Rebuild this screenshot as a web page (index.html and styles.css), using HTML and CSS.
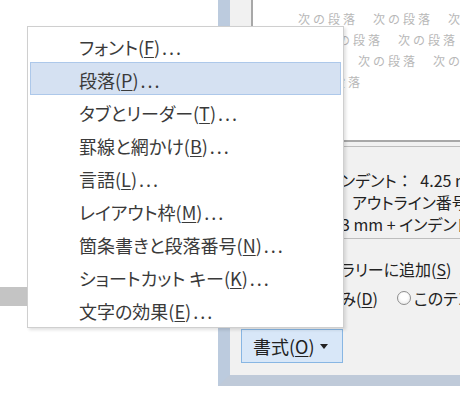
FILE: index.html
```html
<!DOCTYPE html>
<html lang="ja">

<head>
    <meta charset="UTF-8">
    <meta name="viewport" content="width=device-width, initial-scale=1.0">
    <title>書式メニュー</title>
    <link rel="stylesheet" href="styles.css">
</head>

<body>
    <!-- piece of the window behind -->
    <div class="back-bar"></div>

    <div class="dialog">
        <div class="preview">
            <div class="pv-line pv-1">次の段落　次の段落　次の段落</div>
            <div class="pv-line pv-2">次の段落　次の段落　次の段落</div>
            <div class="pv-line pv-3">次の段落　次の段落　次の段落</div>
            <div class="pv-line pv-4">次の段落</div>
        </div>

        <div class="desc">
            <div class="desc-line">ンデント<span class="colon">：</span> 4.25 mm</div>
            <div class="desc-line shift">アウトライン番号 + レベル: 1</div>
            <div class="desc-line">3 mm + インデント: 7.4 mm</div>
        </div>

        <div class="opt-row opt-check">ラリーに追加(<u>S</u>)</div>
        <div class="opt-row opt-radio">
            <span>のみ(<u>D</u>)</span>
            <span class="radio"></span>
            <span class="radio-text">このテンプレートを使用した新規文書</span>
        </div>

        <button class="fmt-btn">書式(<u>O</u>)<span class="caret"></span></button>
    </div>

    <ul class="menu">
        <li>フォント(<u>F</u>)<span class="dots">...</span></li>
        <li class="active">段落(<u>P</u>)<span class="dots">...</span></li>
        <li>タブとリーダー(<u>T</u>)<span class="dots">...</span></li>
        <li>罫線と網かけ(<u>B</u>)<span class="dots">...</span></li>
        <li>言語(<u>L</u>)<span class="dots">...</span></li>
        <li>レイアウト枠(<u>M</u>)<span class="dots">...</span></li>
        <li>箇条書きと段落番号(<u>N</u>)<span class="dots">...</span></li>
        <li>ショートカット キー(<u>K</u>)<span class="dots">...</span></li>
        <li>文字の効果(<u>E</u>)<span class="dots">...</span></li>
    </ul>
</body>

</html>
```

FILE: styles.css
```css
/* General styling */
body {
    margin: 0;
    width: 460px;
    height: 399px;
    overflow: hidden;
    position: relative;
    background-color: #fff;
    font-family: "Noto Sans CJK JP", sans-serif;
    font-feature-settings: "palt";
}

u {
    text-decoration: underline;
    text-underline-offset: 2px;
    text-decoration-thickness: 1px;
}

.back-bar {
    position: absolute;
    left: 0;
    top: 287px;
    width: 27px;
    height: 19px;
    background-color: #c4c4c4;
}

/* dialog window behind the menu */
.dialog {
    position: absolute;
    left: 218px;
    top: -20px;
    width: 290px;
    border-left: 12px solid #bccbde;
    border-bottom: 11px solid #bfcad9;
    background-color: #f1f1f1;
    padding-bottom: 12px;
}

.preview {
    box-sizing: border-box;
    height: 162px;
    margin-left: 21px;
    padding-top: 28px;
    background-color: #fff;
    border-left: 2px solid #a8a8a8;
    border-bottom: 2px solid #a8a8a8;
    overflow: hidden;
}

.pv-line {
    font-size: 12px;
    line-height: 21px;
    letter-spacing: 3px;
    color: #b8b8b8;
    white-space: nowrap;
    font-feature-settings: normal;
}

.pv-1 {
    padding-left: 45px;
}

.pv-2 {
    padding-left: 70px;
}

.pv-3 {
    padding-left: 105px;
}

.pv-4 {
    padding-left: 50px;
}

.desc {
    margin: 4px 0 0 21px;
    padding: 22px 0 3px 90px;
    border-top: 1px solid #bdbdbd;
    border-bottom: 1px solid #bdbdbd;
    font-size: 16px;
    line-height: 22px;
    color: #222;
    white-space: nowrap;
}

.colon {
    font-feature-settings: normal;
    margin-right: 4px;
}

.desc-line.shift {
    padding-left: 11px;
}

.opt-row {
    font-size: 16px;
    line-height: 22px;
    color: #222;
    white-space: nowrap;
}

.opt-check {
    margin-top: 19px;
    padding-left: 111px;
}

.opt-radio {
    margin-top: 7px;
    padding-left: 95px;
    display: flex;
    align-items: center;
}

.radio {
    flex-shrink: 0;
    box-sizing: border-box;
    width: 14px;
    height: 14px;
    margin-left: 19px;
    border: 1px solid #8e8e8e;
    border-radius: 50%;
    background: radial-gradient(circle at 50% 40%, #fff 35%, #e2e2e2 100%);
}

.radio-text {
    margin-left: 3px;
}

.fmt-btn {
    display: flex;
    align-items: center;
    box-sizing: border-box;
    width: 102px;
    height: 34px;
    margin: 20px 0 0 11px;
    padding: 0 0 0 11px;
    border: 1px solid #88b6e3;
    background-color: #d8e7f8;
    font-family: inherit;
    font-feature-settings: "palt";
    font-size: 18px;
    color: #222;
}

.caret {
    width: 0;
    height: 0;
    margin-left: 5px;
    border-left: 4.5px solid transparent;
    border-right: 4.5px solid transparent;
    border-top: 5px solid #222;
}

/* popup menu */
.menu {
    position: absolute;
    left: 27px;
    top: 26px;
    width: 317px;
    box-sizing: border-box;
    margin: 0;
    padding: 2px 2px 1px;
    list-style: none;
    background-color: #fff;
    border: 1px solid #cfcfcf;
    box-shadow: 2px 2px 3px rgba(0, 0, 0, 0.12);
}

.menu li {
    display: flex;
    align-items: center;
    box-sizing: border-box;
    height: 33px;
    padding: 2px 0 0 48px;
    border: 1px solid transparent;
    font-size: 18px;
    color: #3a3a3a;
    white-space: nowrap;
}

.menu li.active {
    background-color: #d5e1f2;
    border-color: #adc8ea;
}

.dots {
    margin-left: 2px;
    letter-spacing: 2px;
}
```
